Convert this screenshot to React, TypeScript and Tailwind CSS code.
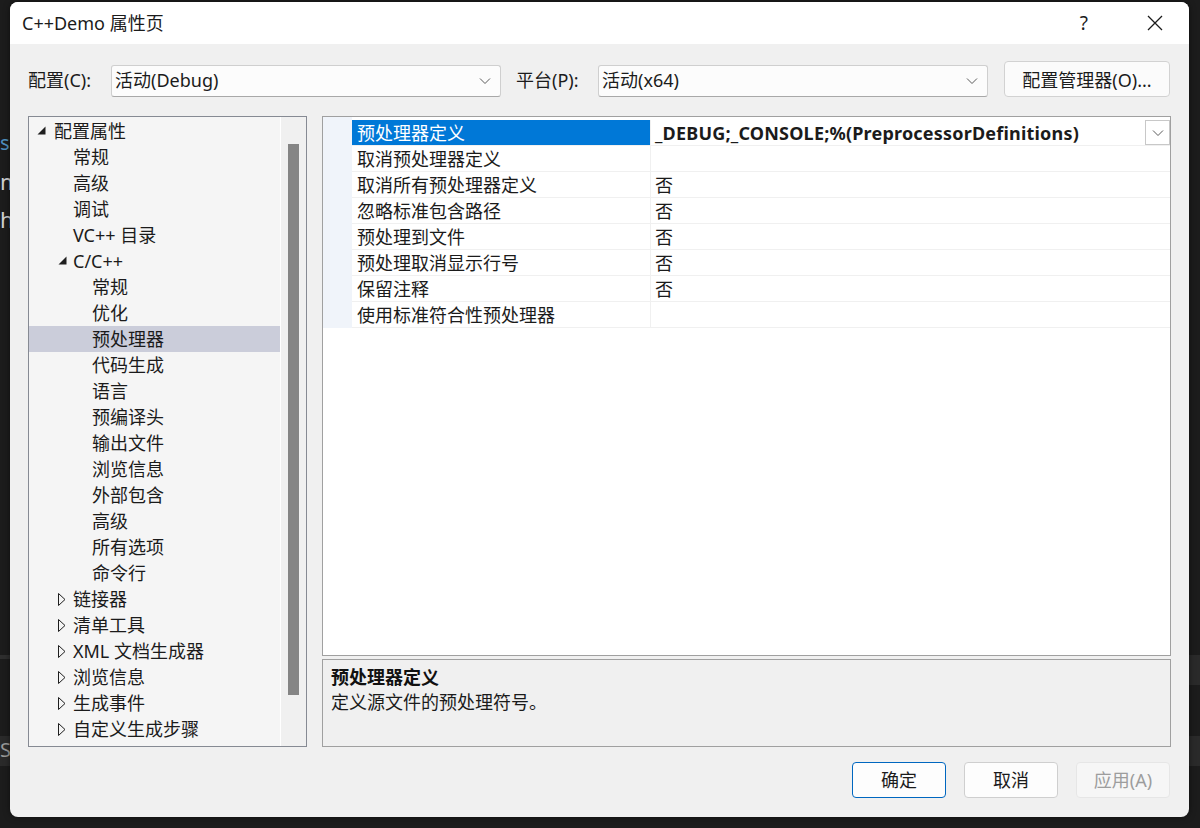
import React from "react";

const FONT = '"Noto Sans", "Noto Sans CJK SC", sans-serif';

type Node = { label: string; level: number; state?: "open" | "closed"; selected?: boolean };

const tree: Node[] = [
  { label: "配置属性", level: 0, state: "open" },
  { label: "常规", level: 1 },
  { label: "高级", level: 1 },
  { label: "调试", level: 1 },
  { label: "VC++ 目录", level: 1 },
  { label: "C/C++", level: 1, state: "open" },
  { label: "常规", level: 2 },
  { label: "优化", level: 2 },
  { label: "预处理器", level: 2, selected: true },
  { label: "代码生成", level: 2 },
  { label: "语言", level: 2 },
  { label: "预编译头", level: 2 },
  { label: "输出文件", level: 2 },
  { label: "浏览信息", level: 2 },
  { label: "外部包含", level: 2 },
  { label: "高级", level: 2 },
  { label: "所有选项", level: 2 },
  { label: "命令行", level: 2 },
  { label: "链接器", level: 1, state: "closed" },
  { label: "清单工具", level: 1, state: "closed" },
  { label: "XML 文档生成器", level: 1, state: "closed" },
  { label: "浏览信息", level: 1, state: "closed" },
  { label: "生成事件", level: 1, state: "closed" },
  { label: "自定义生成步骤", level: 1, state: "closed" },
];

const props: { name: string; value: string }[] = [
  { name: "预处理器定义", value: "_DEBUG;_CONSOLE;%(PreprocessorDefinitions)" },
  { name: "取消预处理器定义", value: "" },
  { name: "取消所有预处理器定义", value: "否" },
  { name: "忽略标准包含路径", value: "否" },
  { name: "预处理到文件", value: "否" },
  { name: "预处理取消显示行号", value: "否" },
  { name: "保留注释", value: "否" },
  { name: "使用标准符合性预处理器", value: "" },
];

function Chevron({ className = "" }: { className?: string }) {
  return (
    <svg width="12" height="8" viewBox="0 0 12 8" className={className}>
      <path d="M1 1.5 L6 6.5 L11 1.5" fill="none" stroke="#5a5a5a" strokeWidth="1" />
    </svg>
  );
}

function Expander({ state }: { state?: "open" | "closed" }) {
  if (state === "open") {
    return (
      <svg width="9" height="9" viewBox="0 0 9 9">
        <polygon points="8.5,0.5 8.5,8.5 0.5,8.5" fill="#1e1e1e" />
      </svg>
    );
  }
  if (state === "closed") {
    return (
      <svg width="8" height="13" viewBox="0 0 8 13">
        <path d="M0.5 0.5 L7 6.5 L0.5 12.5 Z" fill="none" stroke="#1e1e1e" strokeWidth="1" />
      </svg>
    );
  }
  return null;
}

function TreeRow({ n }: { n: Node }) {
  const textLeft = [25, 44, 63][n.level];
  const triLeft = n.level === 0 ? 8 : 29;
  return (
    <div
      className={`relative flex h-[26px] items-center ${n.selected ? "bg-[#cbcdda]" : ""}`}
      style={{ paddingLeft: textLeft }}
    >
      {n.state && (
        <span
          className={`absolute flex items-center ${n.state === "open" ? "top-[8px]" : "top-[7px]"}`}
          style={{ left: triLeft }}
        >
          <Expander state={n.state} />
        </span>
      )}
      <span className="whitespace-nowrap text-[18px] leading-[26px] text-[#1b1b1b]">{n.label}</span>
    </div>
  );
}

export default function App() {
  return (
    <div
      className="relative h-[828px] w-[1200px] overflow-hidden bg-[#1c1c1c] pl-[10px] pt-[2px]"
      style={{ fontFamily: FONT }}
    >
      {/* background editor fragments */}
      <div className="absolute left-0 top-[130px] text-[20px] leading-[26px] text-[#4f8fbf]">s</div>
      <div className="absolute left-0 top-[168px] text-[22px] leading-[26px] text-[#d0d0d0]">m</div>
      <div className="absolute left-0 top-[206px] text-[22px] leading-[26px] text-[#d0d0d0]">h</div>
      <div className="absolute left-0 top-[655px] h-[4px] w-[10px] bg-[#2e2e2e]" />
      <div className="absolute left-0 top-[736px] h-[30px] w-[10px] bg-[#2a2a2a]" />
      <div className="absolute left-0 top-[737px] text-[20px] leading-[26px] text-[#9a9a9a]">Se</div>
      <div className="absolute right-0 top-[655px] h-[30px] w-[11px] bg-[#2a2a2a]" />
      <div className="absolute right-0 top-[736px] h-[30px] w-[11px] bg-[#2a2a2a]" />

      <div className="relative flex h-[815px] w-[1179px] flex-col overflow-hidden rounded-[8px] bg-[#f0f0f0] shadow-[0_0_6px_rgba(0,0,0,0.5)]">
        {/* Title bar */}
        <div className="flex h-[42px] shrink-0 items-center bg-white pl-[12px]">
          <span className="text-[18px] leading-[24px] text-[#1b1b1b]">C++Demo 属性页</span>
          <div className="ml-auto flex h-full items-center">
            <span className="mr-[59px] text-[19px] text-[#1b1b1b]">?</span>
            <svg width="16" height="16" viewBox="0 0 16 16" className="mr-[26px]">
              <path d="M1 1 L15 15 M15 1 L1 15" stroke="#1b1b1b" strokeWidth="1.3" />
            </svg>
          </div>
        </div>

        {/* Config row */}
        <div className="mt-[17px] flex h-[36px] shrink-0 items-center pl-[18px]">
          <span className="w-[83px] pt-[3px] text-[18px] text-[#1b1b1b]">配置(C):</span>
          <div className="mt-[3px] flex h-[32px] w-[390px] items-center rounded-[3px] border border-[#cfcfcf] border-b-[#a8a8a8] bg-[#fcfcfc] pl-[3px] pr-[9px]">
            <span className="text-[18px] text-[#1b1b1b]">活动(Debug)</span>
            <Chevron className="ml-auto" />
          </div>
          <span className="ml-[15px] w-[82px] pt-[3px] text-[18px] text-[#1b1b1b]">平台(P):</span>
          <div className="mt-[3px] flex h-[32px] w-[390px] items-center rounded-[3px] border border-[#cfcfcf] border-b-[#a8a8a8] bg-[#fcfcfc] pl-[3px] pr-[9px]">
            <span className="text-[18px] text-[#1b1b1b]">活动(x64)</span>
            <Chevron className="ml-auto" />
          </div>
          <div className="ml-[16px] flex h-[36px] w-[166px] items-center justify-center rounded-[4px] border border-[#d2d2d2] bg-[#fbfbfb] pt-[2px]">
            <span className="text-[18px] text-[#1b1b1b]">配置管理器(O)...</span>
          </div>
        </div>

        {/* Main */}
        <div className="mt-[19px] flex h-[631px] shrink-0 pl-[18px]">
          {/* Tree */}
          <div className="flex h-[631px] w-[279px] border border-[#868a93] bg-[#f5f5f5]">
            <div className="flex-1 pt-[1px]">
              {tree.map((n, i) => (
                <TreeRow key={i} n={n} />
              ))}
            </div>
            <div className="w-[26px] border-l border-white bg-[#f0f0f0] pl-[7px] pt-[27px]">
              <div className="h-[551px] w-[11px] bg-[#858585]" />
            </div>
          </div>

          {/* Right column */}
          <div className="ml-[15px] flex w-[849px] flex-col">
            <div className="flex h-[541px] flex-col border border-[#a0a0a0] bg-white">
              <div className="flex h-[3px]">
                <div className="w-[29px] bg-[#f0f4fa]" />
              </div>
              {props.map((p, i) => (
                <div key={i} className="flex h-[26px]">
                  <div className="w-[29px] bg-[#f0f4fa]" />
                  <div className="flex flex-1 border-b border-[#f0f0f0]">
                    <div
                      className={`flex w-[299px] items-center border-r border-[#f0f0f0] pl-[5px] pt-[1px] ${
                        i === 0 ? "bg-[#0078d7] text-white" : "text-[#1b1b1b]"
                      }`}
                    >
                      <span className="whitespace-nowrap text-[18px]">{p.name}</span>
                    </div>
                    <div className="relative flex flex-1 items-center pl-[4px] pt-[1px]">
                      <span
                        className={`whitespace-nowrap text-[18px] text-[#1b1b1b] ${
                          i === 0 ? "font-bold tracking-[0.2px]" : ""
                        }`}
                      >
                        {p.value}
                      </span>
                      {i === 0 && (
                        <div className="absolute right-0 top-0 flex h-[25px] w-[25px] items-center justify-center border border-[#c8c8c8] bg-white">
                          <Chevron />
                        </div>
                      )}
                    </div>
                  </div>
                </div>
              ))}
            </div>
            <div className="mt-[3px] flex h-[88px] flex-col border border-[#a0a0a0] bg-[#f0f0f0] pl-[8px] pt-[4px]">
              <span className="text-[18px] font-bold leading-[26px] text-[#111]">预处理器定义</span>
              <span className="text-[18px] leading-[24px] text-[#1b1b1b]">定义源文件的预处理符号。</span>
            </div>
          </div>
        </div>

        {/* Buttons */}
        <div className="mt-[15px] flex justify-end gap-[18px] pr-[19px]">
          <div className="flex h-[36px] w-[94px] items-center justify-center rounded-[4px] border border-[#0067c0] bg-[#fdfdfd] text-[18px] text-[#1b1b1b]">
            确定
          </div>
          <div className="flex h-[36px] w-[94px] items-center justify-center rounded-[4px] border border-[#cfcfcf] bg-[#fdfdfd] text-[18px] text-[#1b1b1b]">
            取消
          </div>
          <div className="flex h-[36px] w-[94px] items-center justify-center rounded-[4px] border border-[#e6e6e6] bg-[#f6f6f6] text-[18px] text-[#9d9d9d]">
            应用(A)
          </div>
        </div>
      </div>
    </div>
  );
}
